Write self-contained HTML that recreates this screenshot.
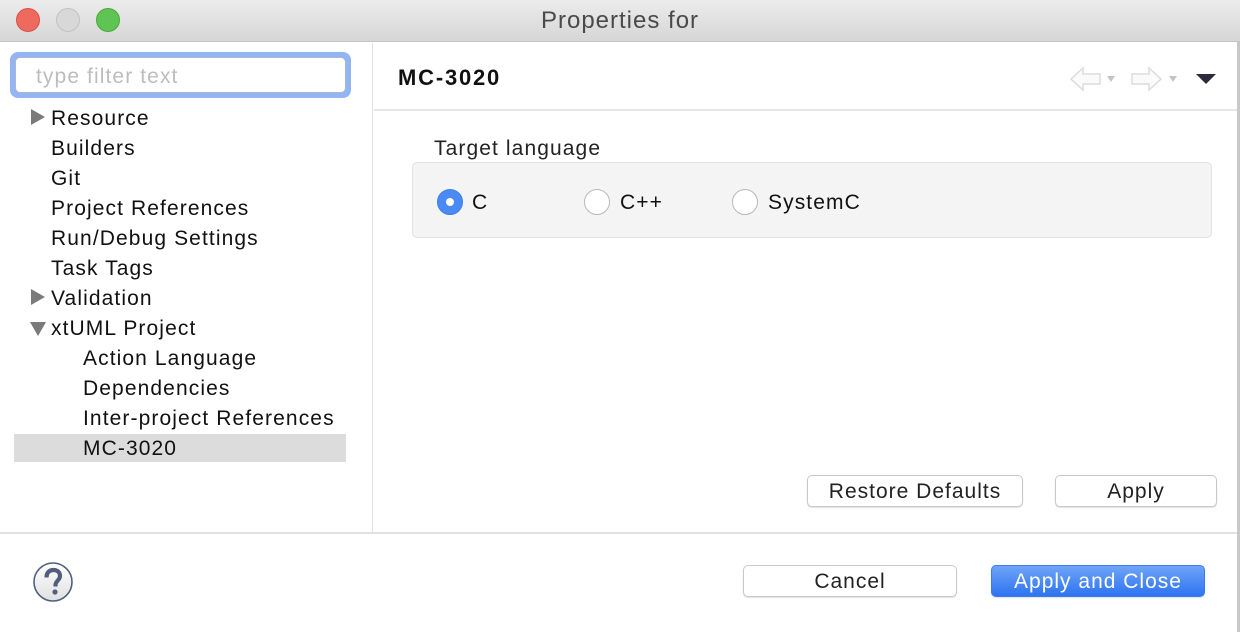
<!DOCTYPE html>
<html><head><style>
*{margin:0;padding:0;box-sizing:border-box}
body{width:1240px;height:632px;overflow:hidden;background:#fff;font-family:"Liberation Sans",sans-serif;color:#111;position:relative}
.a{position:absolute}
.t{font-size:21px;letter-spacing:1.1px;position:absolute;line-height:24px;white-space:nowrap}
.btn{position:absolute;height:32px;border:1px solid #c8c8c8;border-radius:5px;background:#fff;font-size:21px;letter-spacing:1px;text-align:center;line-height:32px;box-shadow:0 1px 1px rgba(0,0,0,.12);color:#222}
.rad{position:absolute;width:26px;height:26px;border-radius:50%;border:1px solid #b8b8b8;background:#fff}
</style></head><body>
<div class="a" style="left:0;top:0;width:1240px;height:42px;background:linear-gradient(#ececec,#d6d6d6);border-bottom:1px solid #c4c4c4"></div>
<div class="a" style="left:16px;top:8px;width:24px;height:24px;border-radius:50%;background:#ee6a5f;border:1px solid #d65248"></div>
<div class="a" style="left:56px;top:8px;width:24px;height:24px;border-radius:50%;background:#d8d8d8;border:1px solid #c2c2c2"></div>
<div class="a" style="left:96px;top:8px;width:24px;height:24px;border-radius:50%;background:#5fc453;border:1px solid #4aa83f"></div>
<div class="a" style="left:0;top:6px;width:1240px;text-align:center;font-size:24px;letter-spacing:1px;color:#4a4a4a;line-height:30px">Properties for</div>
<div class="a" style="left:1237px;top:42px;width:3px;height:590px;background:#c8c8c8"></div>
<div class="a" style="left:372px;top:43px;width:1px;height:490px;background:#e0e0e0"></div>
<div class="a" style="left:0;top:532px;width:1237px;height:2px;background:#e2e2e2"></div>
<div class="a" style="left:10px;top:52px;width:341px;height:46px;border-radius:8px;background:#93b5f2"></div>
<div class="a" style="left:15px;top:57px;width:331px;height:36px;border-radius:5px;background:#fff;border:1px solid #a8b8d8"></div>
<div class="t" style="left:36px;top:65px;color:#bdbdbd">type filter text</div>
<div class="a" style="left:14px;top:434px;width:332px;height:28px;background:#dcdcdc"></div>
<div class="a" style="left:31px;top:109px;width:0;height:0;border-top:8px solid transparent;border-bottom:8px solid transparent;border-left:14px solid #7a7a7a"></div>
<div class="a" style="left:31px;top:289px;width:0;height:0;border-top:8px solid transparent;border-bottom:8px solid transparent;border-left:14px solid #7a7a7a"></div>
<div class="a" style="left:30px;top:322px;width:0;height:0;border-left:8px solid transparent;border-right:8px solid transparent;border-top:14px solid #7a7a7a"></div>
<div class="t" style="left:51px;top:107px">Resource</div>
<div class="t" style="left:51px;top:137px">Builders</div>
<div class="t" style="left:51px;top:167px">Git</div>
<div class="t" style="left:51px;top:197px">Project References</div>
<div class="t" style="left:51px;top:227px">Run/Debug Settings</div>
<div class="t" style="left:51px;top:257px">Task Tags</div>
<div class="t" style="left:51px;top:287px">Validation</div>
<div class="t" style="left:51px;top:317px">xtUML Project</div>
<div class="t" style="left:83px;top:347px">Action Language</div>
<div class="t" style="left:83px;top:377px">Dependencies</div>
<div class="t" style="left:83px;top:407px">Inter-project References</div>
<div class="t" style="left:83px;top:437px">MC-3020</div>
<div class="t" style="left:398px;top:66px;font-weight:bold;font-size:22px;letter-spacing:1.8px">MC-3020</div>
<svg class="a" style="left:1068px;top:64px" width="160" height="30">
<path d="M3 15 L15 4 V10 H32 V20 H15 V26 Z" fill="#fafafa" stroke="#dcdcdc" stroke-width="1.5"/>
<path d="M39 12 L47 12 L43 18Z" fill="#c4c4c4"/>
<path d="M93 15 L81 4 V10 H64 V20 H81 V26 Z" fill="#fafafa" stroke="#dcdcdc" stroke-width="1.5"/>
<path d="M101 12 L109 12 L105 18Z" fill="#c4c4c4"/>
<path d="M128 10 L148 10 L138 20Z" fill="#2e2a3c"/>
</svg>
<div class="a" style="left:374px;top:109px;width:863px;height:2px;background:#e6e6e6"></div>
<div class="t" style="left:434px;top:137px;color:#222">Target language</div>
<div class="a" style="left:412px;top:162px;width:800px;height:76px;background:#f4f4f4;border:1px solid #e3e3e3;border-radius:5px"></div>
<div class="rad" style="left:437px;top:189px;background:#4a8af4;border-color:#3f7ee6"></div>
<div class="a" style="left:446px;top:198px;width:8px;height:8px;border-radius:50%;background:#fff"></div>
<div class="t" style="left:472px;top:191px">C</div>
<div class="rad" style="left:584px;top:189px"></div>
<div class="t" style="left:620px;top:191px">C++</div>
<div class="rad" style="left:732px;top:189px"></div>
<div class="t" style="left:768px;top:191px">SystemC</div>
<div class="btn" style="left:807px;top:475px;width:216px">Restore Defaults</div>
<div class="btn" style="left:1055px;top:475px;width:162px">Apply</div>
<div class="btn" style="left:743px;top:565px;width:214px">Cancel</div>
<div class="btn" style="left:991px;top:565px;width:214px;background:linear-gradient(#6fa4f7,#2d74f1);border-color:#3a7cef;color:#fff">Apply and Close</div>
<svg class="a" style="left:33px;top:562px" width="42" height="42">
<defs><linearGradient id="g" x1="0" y1="0" x2="0" y2="1"><stop offset="0" stop-color="#fff"/><stop offset="1" stop-color="#e0e0e0"/></linearGradient></defs>
<circle cx="20" cy="20" r="19" fill="url(#g)" stroke="#4f5f7c" stroke-width="1.6"/>
<path d="M13.5 15.5 C13.5 10 17 8 20.5 8 C24.5 8 27 10.5 27 14 C27 18 22.5 19 22.5 23 V24.5" fill="none" stroke="#4f5f7c" stroke-width="4.2"/>
<circle cx="22" cy="30" r="2.6" fill="#4f5f7c"/>
</svg>
</body></html>
